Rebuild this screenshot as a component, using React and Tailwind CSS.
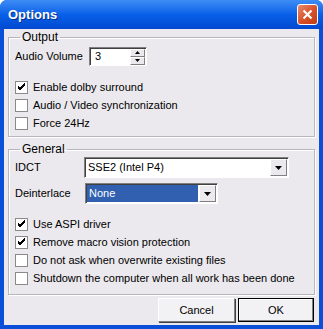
import React from 'react';

const font = { fontFamily: '"Liberation Sans", Arial, sans-serif' };

function Check({ checked, label }) {
    return (
        <label className="flex items-center h-[18px] gap-[5px] whitespace-nowrap">
            <span className="w-[13px] h-[13px] shrink-0 bg-white border border-[#8a8a8a] flex items-center justify-center">
                {checked && (
                    <svg width="9" height="9" viewBox="0 0 9 9">
                        <path d="M1 3 L3 5 L8 0 M1 4 L3 6 L8 1 M1 5 L3 7 L8 2" stroke="#000" strokeWidth="1" fill="none" />
                    </svg>
                )}
            </span>
            <span>{label}</span>
        </label>
    );
}

function DropButton() {
    return (
        <span className="w-[17px] h-[17px] shrink-0 bg-[#ebe9ed] border border-t-white border-l-white border-r-[#808080] border-b-[#808080] flex items-center justify-center">
            <svg width="7" height="4" viewBox="0 0 7 4">
                <path d="M0 0 H7 L3.5 4 Z" fill="#000" />
            </svg>
        </span>
    );
}

export default function App() {
    return (
        <div className="w-[323px] h-[329px] bg-[#0a4fd8] rounded-t-[7px] flex flex-col text-[11px] text-black" style={font}>
            {/* title bar */}
            <div className="h-[29px] rounded-t-[7px] bg-gradient-to-b from-[#3d8cf5] via-[#0860e8] to-[#0349d0] flex items-center justify-between pl-[8px] pr-[5px]">
                <span className="text-white font-bold text-[13px] [text-shadow:1px_1px_0_#0a2f8a]">Options</span>
                <span className="w-[21px] h-[21px] rounded-[3px] border border-white bg-gradient-to-br from-[#e88a6a] via-[#d9532a] to-[#c03a12] flex items-center justify-center">
                    <svg width="11" height="11" viewBox="0 0 11 11">
                        <path d="M1.5 1.5 L9.5 9.5 M9.5 1.5 L1.5 9.5" stroke="#fff" strokeWidth="2.2" />
                    </svg>
                </span>
            </div>

            {/* body */}
            <div className="flex-1 mx-[4px] mb-[4px] bg-[#ebe9ed] px-[4px] pt-[1px] flex flex-col">
                {/* Output */}
                <fieldset className="border border-[#b8b6bc] shadow-[inset_1px_1px_0_#fff,1px_1px_0_#fff] px-[6px] h-[107px]">
                    <legend className="ml-[5px] px-[2px] leading-[14px] text-[12px]">Output</legend>
                    <div className="flex items-center h-[19px] mt-[3px]">
                        <span className="w-[74px] shrink-0 whitespace-nowrap">Audio Volume</span>
                        <div className="w-[58px] h-[19px] bg-white border border-t-[#808080] border-l-[#808080] border-b-white border-r-white shadow-[inset_1px_1px_0_#404040] flex items-center justify-between pl-[5px] pr-[1px]">
                            <span>3</span>
                            <div className="flex flex-col">
                                <span className="w-[15px] h-[8px] bg-[#ebe9ed] border border-t-white border-l-white border-r-[#808080] border-b-[#808080] flex items-center justify-center">
                                    <svg width="5" height="3" viewBox="0 0 5 3"><path d="M0 3 H5 L2.5 0 Z" fill="#000" /></svg>
                                </span>
                                <span className="w-[15px] h-[8px] bg-[#ebe9ed] border border-t-white border-l-white border-r-[#808080] border-b-[#808080] flex items-center justify-center">
                                    <svg width="5" height="3" viewBox="0 0 5 3"><path d="M0 0 H5 L2.5 3 Z" fill="#000" /></svg>
                                </span>
                            </div>
                        </div>
                    </div>
                    <div className="flex flex-col mt-[12px]">
                        <Check checked label="Enable dolby surround" />
                        <Check label="Audio / Video synchronization" />
                        <Check label="Force 24Hz" />
                    </div>
                </fieldset>

                {/* General */}
                <fieldset className="mt-[5px] border border-[#b8b6bc] shadow-[inset_1px_1px_0_#fff,1px_1px_0_#fff] px-[6px] h-[153px]">
                    <legend className="ml-[5px] px-[2px] leading-[14px] text-[12px]">General</legend>
                    <div className="flex items-center mt-[1px]">
                        <span className="w-[69px] shrink-0">IDCT</span>
                        <div className="w-[205px] h-[21px] bg-white border border-t-[#808080] border-l-[#808080] border-b-white border-r-white shadow-[inset_1px_1px_0_#404040] flex items-center justify-between pl-[3px] pr-[1px]">
                            <span>SSE2 (Intel P4)</span>
                            <DropButton />
                        </div>
                    </div>
                    <div className="flex items-center mt-[5px]">
                        <span className="w-[70px] shrink-0">Deinterlace</span>
                        <div className="w-[133px] h-[21px] bg-white border border-t-[#808080] border-l-[#808080] border-b-white border-r-white shadow-[inset_1px_1px_0_#404040] flex items-center justify-between pl-[1px] pr-[1px]">
                            <span className="flex-1 h-[17px] mr-[1px] bg-[#3160b0] text-white pl-[2px] leading-[17px]">None</span>
                            <DropButton />
                        </div>
                    </div>
                    <div className="flex flex-col mt-[11px]">
                        <Check checked label="Use ASPI driver" />
                        <Check checked label="Remove macro vision protection" />
                        <Check label="Do not ask when overwrite existing files" />
                        <Check label="Shutdown the computer when all work has been done" />
                    </div>
                </fieldset>

                {/* buttons */}
                <div className="flex justify-end gap-[3px] mt-[3px] pr-[1px]">
                    <button className="w-[77px] h-[24px] bg-[#f2f1f4] border border-t-white border-l-white border-r-[#808080] border-b-[#808080] shadow-[1px_1px_0_#404040]">Cancel</button>
                    <button className="w-[76px] h-[24px] bg-[#f2f1f4] border border-black shadow-[inset_-1px_-1px_0_#808080,inset_1px_1px_0_#fff]">OK</button>
                </div>
            </div>
        </div>
    );
}
